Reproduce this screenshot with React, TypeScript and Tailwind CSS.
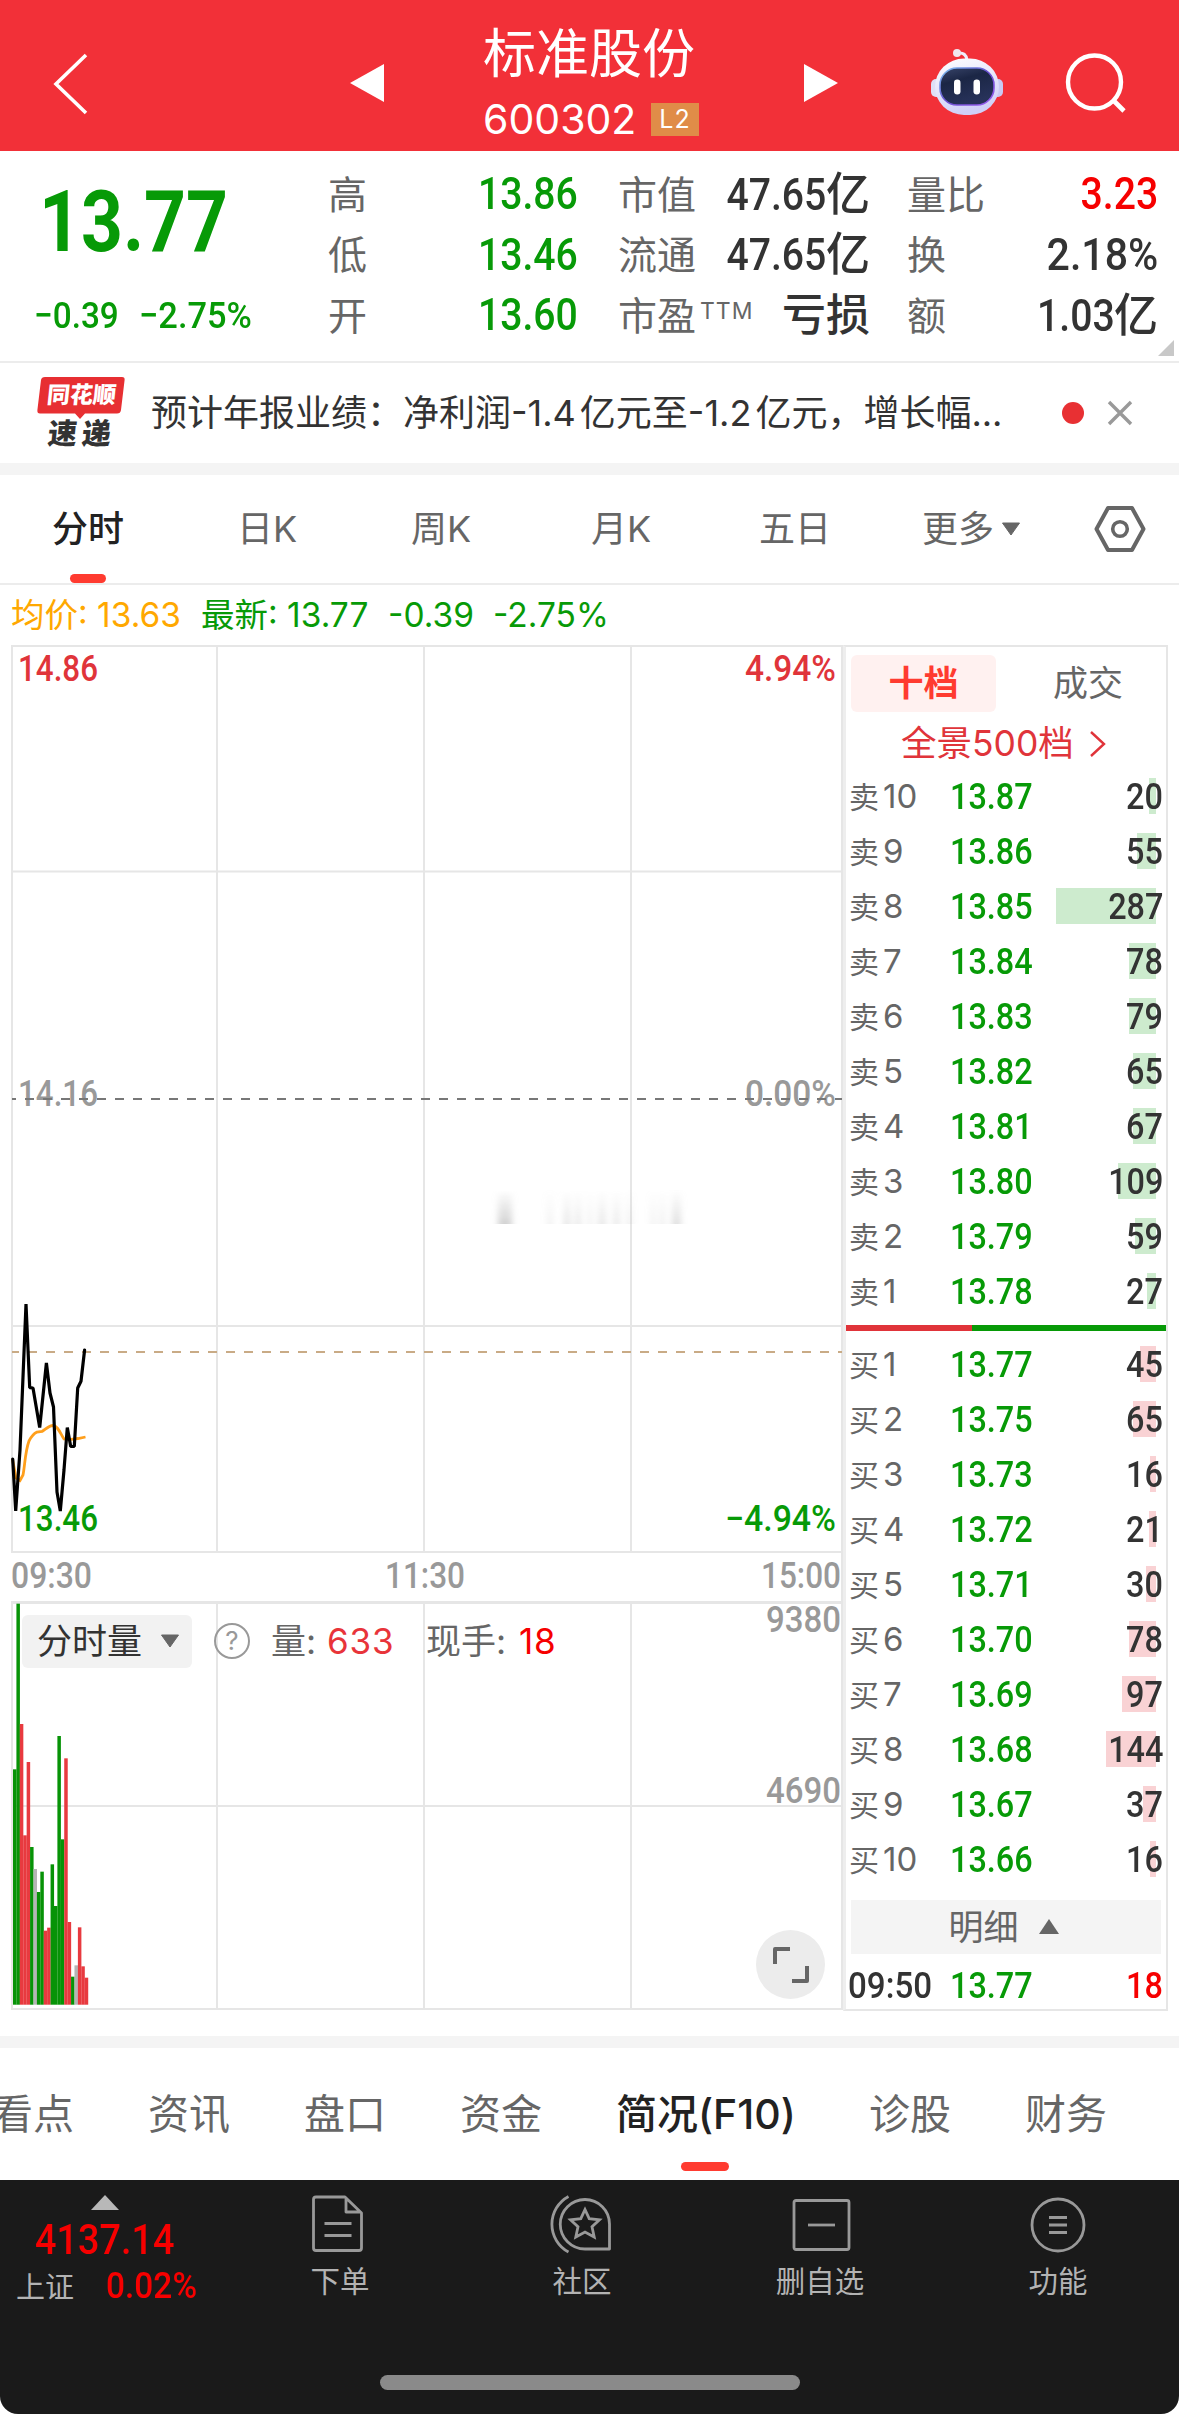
import React from 'react';

type Row = { label: string; no: string; price: string; vol: number };

const asks: Row[] = [
  { label: '卖', no: '10', price: '13.87', vol: 20 },
  { label: '卖', no: '9', price: '13.86', vol: 55 },
  { label: '卖', no: '8', price: '13.85', vol: 287 },
  { label: '卖', no: '7', price: '13.84', vol: 78 },
  { label: '卖', no: '6', price: '13.83', vol: 79 },
  { label: '卖', no: '5', price: '13.82', vol: 65 },
  { label: '卖', no: '4', price: '13.81', vol: 67 },
  { label: '卖', no: '3', price: '13.80', vol: 109 },
  { label: '卖', no: '2', price: '13.79', vol: 59 },
  { label: '卖', no: '1', price: '13.78', vol: 27 },
];

const bids: Row[] = [
  { label: '买', no: '1', price: '13.77', vol: 45 },
  { label: '买', no: '2', price: '13.75', vol: 65 },
  { label: '买', no: '3', price: '13.73', vol: 16 },
  { label: '买', no: '4', price: '13.72', vol: 21 },
  { label: '买', no: '5', price: '13.71', vol: 30 },
  { label: '买', no: '6', price: '13.70', vol: 78 },
  { label: '买', no: '7', price: '13.69', vol: 97 },
  { label: '买', no: '8', price: '13.68', vol: 144 },
  { label: '买', no: '9', price: '13.67', vol: 37 },
  { label: '买', no: '10', price: '13.66', vol: 16 },
];

const pricePoints =
  '12.7,1459 15.7,1511 20,1450 26,1304 29.7,1387.7 33,1388 39.7,1427.5 46.4,1363 50,1393 53.5,1407 57,1492 60.3,1511 64,1470 67.3,1427.5 70.7,1446.5 74.3,1446.5 77.7,1388 81,1381.3 84.6,1350';

const avgPath =
  'M12.5 1459 L16 1478 L20 1480.5 L23 1475 C25 1465 25 1452 29 1441 C32 1435 35 1433 37 1432 L42 1431.5 C46 1429 49 1425.5 53 1425.5 C58 1426 60 1433 64 1439 L71 1439.3 L78 1438.5 L85.5 1437';

// one bar per minute: g = down, r = up, x = flat
const barTops = [688, 191, 552, 886, 666, 921, 987, 1056, 995, 1172, 1163, 973, 1098, 588, 898, 655, 1146, 1310, 1276, 1162, 1279, 1313];
const barKinds = 'ggrrrgxggrrggggrrgxrrr';
const barFill: Record<string, string> = { g: '#079307', r: '#e83a3f', x: '#b5b5b5' };

const Num: React.FC<{ children: React.ReactNode; className?: string }> = ({ children, className = '' }) => (
  <span className={`inline-block whitespace-nowrap font-[Roboto,'Noto_Sans_CJK_SC',sans-serif] ${className}`}>
    {children}
  </span>
);

const AxisText: React.FC<{ x: number; y: number; w: number; fill: string; end?: boolean; children: string }> = ({
  x,
  y,
  w,
  fill,
  end,
  children,
}) => (
  <text
    x={end ? x - w : x}
    y={y}
    textLength={w}
    lengthAdjust="spacingAndGlyphs"
    fill={fill}
    className="font-[Roboto] text-[36px] font-medium"
  >
    {children}
  </text>
);

const Header: React.FC = () => (
  <header className="flex h-[151px] items-start bg-[#f23038] text-white">
    <svg className="mt-[50px] ml-[50px] h-[68px] w-[40px]" viewBox="0 0 40 68" fill="none">
      <path d="M36 5 L6 34 L36 63" stroke="#fff" strokeWidth="3.6" />
    </svg>
    <svg className="mt-[62px] ml-[260px] h-[42px] w-[35px]" viewBox="0 0 35 42">
      <path d="M34 2 L0 21 L34 40Z" fill="#fff" />
    </svg>
    <div className="ml-[98px] w-[220px]">
      <div className="mt-[24px] text-[53px] leading-[60px] whitespace-nowrap">标准股份</div>
      <div className="mt-[13px] flex h-[44px] items-center">
        <span className="text-[41px] leading-[44px]">600302</span>
        <span className="mr-[4px] ml-auto flex h-[33px] w-[48px] items-center justify-center bg-[#e08c48] text-[25px] leading-none tracking-[1px]">
          L2
        </span>
      </div>
    </div>
    <svg className="mt-[62px] ml-[100px] h-[42px] w-[35px]" viewBox="0 0 35 42">
      <path d="M1 2 L35 21 L1 40Z" fill="#fff" />
    </svg>
    <svg className="mt-[48px] ml-[92px] h-[70px] w-[74px]" viewBox="929 48 74 70">
      <defs>
        <linearGradient id="shell" x1="0" y1="0" x2="0.3" y2="1">
          <stop offset="0" stopColor="#ffffff" />
          <stop offset="0.6" stopColor="#e3e3fa" />
          <stop offset="1" stopColor="#cfd0f8" />
        </linearGradient>
        <linearGradient id="face" x1="0" y1="0" x2="0.4" y2="1">
          <stop offset="0" stopColor="#39456a" />
          <stop offset="0.4" stopColor="#1b2645" />
          <stop offset="1" stopColor="#27325a" />
        </linearGradient>
        <linearGradient id="rim" x1="0" y1="0" x2="1" y2="1">
          <stop offset="0" stopColor="#7cc4f0" />
          <stop offset="0.5" stopColor="#6a4fd0" />
          <stop offset="1" stopColor="#9a5cf0" />
        </linearGradient>
      </defs>
      <path d="M957 53 q8 -1 9 7" fill="none" stroke="#efeefb" strokeWidth="3" />
      <circle cx="956" cy="53" r="4" fill="#f0e6ee" />
      <rect x="930" y="79" width="12" height="18" rx="5" fill="#dfe0f6" />
      <rect x="990" y="79" width="12" height="18" rx="5" fill="#c9caf3" />
      <rect x="934" y="58.500" width="64" height="56.500" rx="29" fill="url(#shell)" />
      <rect x="939" y="68" width="54" height="37" rx="17" fill="url(#face)" stroke="url(#rim)" strokeWidth="1.6" />
      <rect x="953" y="79.500" width="6.500" height="15" rx="3.200" fill="#fff" />
      <rect x="972.500" y="79.500" width="6.500" height="15" rx="3.200" fill="#fff" />
    </svg>
    <svg className="mt-[50px] ml-[60px] h-[66px] w-[66px]" viewBox="1063 50 66 66" fill="none" stroke="#fff">
      <circle cx="1093.500" cy="82" r="26.500" strokeWidth="4.400" />
      <path d="M1112 100 L1123 111" strokeWidth="4.600" />
    </svg>
  </header>
);

const Stat: React.FC<{ label: React.ReactNode; children: React.ReactNode }> = ({ label, children }) => (
  <div className="flex h-[60.500px] items-center justify-between">
    <span className="flex text-[39px] leading-none whitespace-nowrap text-[#666]">{label}</span>
    {children}
  </div>
);

const valueCls = 'origin-right scale-x-[0.87] text-[45px] leading-[46px] font-medium';
const Yi = () => <span className="inline-block origin-right scale-x-[1.1] pl-[4px] text-[46px] leading-[46px] font-medium">亿</span>;

const Quote: React.FC = () => (
  <section className="relative flex h-[212px] border-b-2 border-[#ececec] pt-[13px]">
    <div className="w-[328px] text-[#079a07]">
      <Num className="mt-[8px] ml-[39px] origin-left scale-x-[0.86] text-[85px] leading-[100px] font-bold">13.77</Num>
      <div className="mt-[20px] flex text-[37px] leading-[48px] font-medium">
        <Num className="ml-[34px] w-[105px] origin-left scale-x-[0.9]">−0.39</Num>
        <Num className="origin-left scale-x-[0.93]">−2.75%</Num>
      </div>
    </div>
    <div className="w-[250px]">
      <Stat label="高"><Num className={`${valueCls} text-[#079a07]`}>13.86</Num></Stat>
      <Stat label="低"><Num className={`${valueCls} text-[#079a07]`}>13.46</Num></Stat>
      <Stat label="开"><Num className={`${valueCls} text-[#079a07]`}>13.60</Num></Stat>
    </div>
    <div className="ml-[40px] w-[252px] text-[#333]">
      <Stat label="市值"><Num className={valueCls}>47.65<Yi /></Num></Stat>
      <Stat label="流通"><Num className={valueCls}>47.65<Yi /></Num></Stat>
      <Stat label={<>市盈<span className="ml-[4px] text-[23px] leading-[30px] tracking-[1px]">TTM</span></>}>
        <span className="text-[44px] leading-none font-medium">亏损</span>
      </Stat>
    </div>
    <div className="ml-[37px] w-[251px] text-[#333]">
      <Stat label="量比"><Num className={`${valueCls} text-[#f60000]`}>3.23</Num></Stat>
      <Stat label="换"><span className="flex origin-right scale-x-[1.05]"><Num className={valueCls}>2.18%</Num></span></Stat>
      <Stat label="额"><Num className={valueCls}>1.03<Yi /></Num></Stat>
    </div>
    <svg className="absolute right-[5px] bottom-[5px] h-[16px] w-[16px]" viewBox="0 0 16 16">
      <path d="M16 0 V16 H0Z" fill="#c8c8c8" />
    </svg>
  </section>
);

const NewsBar: React.FC = () => (
  <section className="flex h-[100px] items-center">
    <div className="relative ml-[36px] h-[74px] w-[90px] shrink-0">
      <svg className="absolute inset-0 h-[74px] w-[90px]" viewBox="36 375 90 74">
        <path d="M45 376 H122 Q125 376 124.600 379 L121 409 Q120.500 412.500 117 412.500 H85 L80 418 L75 412.500 H40 Q37 412.500 37.400 409 L41 379 Q41.500 376 45 376Z" fill="#e72f32" />
      </svg>
      <span className="absolute top-[7px] left-[11px] -skew-x-6 text-[23px] leading-[24px] font-black whitespace-nowrap text-white">同花顺</span>
      <span className="absolute top-[43px] left-[12px] -skew-x-6 text-[29px] leading-[30px] font-black tracking-[5px] whitespace-nowrap text-[#333]">速递</span>
    </div>
    <span className="ml-[25px] w-[880px] shrink-0 text-[36px] leading-[48px] whitespace-nowrap text-[#333]">
      预计年报业绩：净利润-1.4<span className="ml-[4px]">亿元至-1.2</span><span className="ml-[4px]">亿元，增长幅...</span>
    </span>
    <span className="ml-[31px] h-[22px] w-[22px] rounded-full bg-[#e83033]" />
    <svg className="ml-[23px] h-[26px] w-[26px]" viewBox="0 0 26 26" stroke="#999" strokeWidth="3.400">
      <path d="M2 2 L24 24 M24 2 L2 24" />
    </svg>
  </section>
);

const PeriodTabs: React.FC = () => (
  <nav className="flex h-[110px] items-center border-b-2 border-[#ececec] text-[36px] leading-none whitespace-nowrap text-[#666]">
    <div className="relative ml-[52px] flex h-full w-[185px] items-center font-medium text-[#222]">
      分时
      <span className="absolute bottom-0 left-[18px] h-[9px] w-[36px] rounded-full bg-[#ff3b30]" />
    </div>
    <span className="w-[174px]">日K</span>
    <span className="w-[180px]">周K</span>
    <span className="w-[168px]">月K</span>
    <span className="w-[163px]">五日</span>
    <span>更多</span>
    <svg className="ml-[7px] h-[14px] w-[20px]" viewBox="0 0 20 14">
      <path d="M1.500 1 H18.500 L10 13Z" fill="#666" stroke="#666" strokeLinejoin="round" />
    </svg>
    <svg className="ml-[73px] h-[50px] w-[54px]" viewBox="1093 504 54 50" fill="none" stroke="#666">
      <path d="M1107 508 H1131 L1142.500 529 L1131 550 H1107 L1095.500 529Z" strokeWidth="4" strokeLinejoin="round" />
      <circle cx="1119" cy="529" r="7.300" strokeWidth="3.600" />
    </svg>
  </nav>
);

const PriceChart: React.FC = () => (
  <svg className="block h-[957px] w-[832px] overflow-visible" viewBox="11 645 832 957">
    <defs>
      <linearGradient id="smudge" x1="0" y1="0" x2="0" y2="1">
        <stop offset="0" stopColor="#bbb" stopOpacity="0" />
        <stop offset="1" stopColor="#bbb" stopOpacity="0.65" />
      </linearGradient>
      <filter id="soft" x="-10%" width="120%" y="0" height="1">
        <feGaussianBlur stdDeviation="3 0" />
      </filter>
    </defs>
    <g stroke="#e6e6e6" strokeWidth="2">
      <path d="M11 646 H843 M12 645 V1552 M842 645 V1602 M11 1552 H842" fill="none" />
      <path d="M217 645 V1552 M424 645 V1552 M631 645 V1552 M11 871.500 H842 M11 1326 H842" fill="none" />
    </g>
    <g filter="url(#soft)" fill="url(#smudge)">
      <rect x="498" y="1190" width="14" height="34" />
      <rect x="547" y="1190" width="6" height="34" opacity="0.3" />
      <rect x="564" y="1190" width="6" height="34" opacity="0.6" />
      <rect x="575" y="1190" width="6" height="34" opacity="0.5" />
      <rect x="588" y="1190" width="4" height="34" opacity="0.4" />
      <rect x="598" y="1190" width="8" height="34" opacity="0.5" />
      <rect x="613" y="1190" width="7" height="34" opacity="0.45" />
      <rect x="627" y="1190" width="5" height="34" opacity="0.4" />
      <rect x="651" y="1190" width="4" height="34" opacity="0.4" />
      <rect x="660" y="1190" width="5" height="34" opacity="0.4" />
      <rect x="672" y="1190" width="9" height="34" opacity="0.7" />
    </g>
    <AxisText x={18} y={681} w={80} fill="#e0343a">14.86</AxisText>
    <AxisText x={836} y={681} w={91} fill="#e0343a" end>4.94%</AxisText>
    <AxisText x={18} y={1106} w={80} fill="#999">14.16</AxisText>
    <AxisText x={836} y={1106} w={91} fill="#999" end>0.00%</AxisText>
    <path d="M12 1099 H842" stroke="#777" strokeWidth="2" strokeDasharray="9 9" strokeDashoffset="5" />
    <path d="M12 1352 H842" stroke="#c9ab86" strokeWidth="2" strokeDasharray="9 9" strokeDashoffset="2" />
    <path d={avgPath} fill="none" stroke="#ff9f1c" strokeWidth="2.800" />
    <polyline points={pricePoints} fill="none" stroke="#000" strokeWidth="3.200" strokeLinejoin="bevel" strokeLinecap="round" />
    <AxisText x={18} y={1531} w={80} fill="#079a07">13.46</AxisText>
    <AxisText x={836} y={1531} w={111} fill="#079a07" end>−4.94%</AxisText>
    <AxisText x={11} y={1588} w={81} fill="#999">09:30</AxisText>
    <AxisText x={385} y={1588} w={80} fill="#999">11:30</AxisText>
    <AxisText x={841} y={1588} w={80} fill="#999" end>15:00</AxisText>
  </svg>
);

const VolumeChart: React.FC = () => (
  <div className="relative h-[409px] w-[832px]">
    <svg className="block h-[409px] w-[832px] overflow-visible" viewBox="11 1602 832 409">
      <g stroke="#e6e6e6" strokeWidth="2" fill="none">
        <path d="M11 1602.500 H842" strokeWidth="3" />
        <path d="M12 1602 V2010 M842 1602 V2010 M217 1602 V2010 M424 1602 V2010 M631 1602 V2010 M11 1806 H842 M11 2009 H843" />
      </g>
      {barTops.map((top, i) => {
        const y = 1540 + top / 3;
        return (
          <rect key={i} x={13 + i * 3.415} y={y} width={3.5} height={2004.7 - y} fill={barFill[barKinds[i]]} />
        );
      })}
      <AxisText x={841} y={1632} w={75} fill="#999" end>9380</AxisText>
      <AxisText x={841} y={1803} w={75} fill="#999" end>4690</AxisText>
    </svg>
    <div className="absolute top-[12px] left-[11px] flex h-[54px] items-center text-[35px] leading-none whitespace-nowrap text-[#666]">
      <div className="flex h-[53px] w-[170px] items-center rounded-[6px] bg-[#f2f2f2] pl-[15px] text-[#333]">
        分时量
        <svg className="ml-[18px] h-[14px] w-[20px]" viewBox="0 0 20 14">
          <path d="M1.500 1 H18.500 L10 13Z" fill="#666" stroke="#666" strokeLinejoin="round" />
        </svg>
      </div>
      <span className="ml-[22px] flex h-[36px] w-[36px] items-center justify-center rounded-full border-[2.500px] border-[#999] text-[26px] leading-none text-[#999]">
        ?
      </span>
      <span className="ml-[21px] w-[56px]">量:</span>
      <span className="w-[99px] tracking-[0.8px] text-[#e8343a]">633</span>
      <span className="w-[93px]">现手:</span>
      <span className="tracking-[0.8px] text-[#f60000]">18</span>
    </div>
    <div className="absolute top-[328px] left-[745px] flex h-[69px] w-[69px] items-center justify-center rounded-full bg-[#ececec]">
      <svg className="h-[38px] w-[38px]" viewBox="0 0 38 38" fill="none" stroke="#666" strokeWidth="4">
        <path d="M3 18 V3 H18 M20 35 H35 V20" strokeLinejoin="round" />
      </svg>
    </div>
  </div>
);

const BookRow: React.FC<{ row: Row; sell?: boolean }> = ({ row, sell }) => (
  <div className="relative flex h-[55px] items-center leading-none">
    <span
      className={`absolute top-[9px] right-[10px] h-[36px] ${sell ? 'bg-[#cdebce]' : 'bg-[#f9d2d4]'}`}
      style={{ width: row.vol * 0.348 }}
    />
    <span className="ml-[3px] w-[34px] text-[30px] text-[#666]">{row.label}</span>
    <span className="w-[67px] text-[33px] text-[#666]">{row.no}</span>
    <Num className="origin-left scale-x-[0.9] text-[36px] font-medium text-[#079a07]">{row.price}</Num>
    <Num className="relative mr-[3px] ml-auto origin-right scale-x-[0.9] text-[36px] font-medium text-[#333]">{row.vol}</Num>
  </div>
);

const OrderBook: React.FC = () => (
  <div className="h-[1366px] w-[325px] border-2 border-[#e6e6e6] border-l-[3px] border-l-[#eee]">
    <div className="mt-[8px] flex h-[57px] leading-none">
      <span className="ml-[5px] flex w-[145px] items-center justify-center rounded-[6px] bg-[#fff1f0] text-[35px] font-bold text-[#ff3b30]">
        十档
      </span>
      <span className="flex w-[167px] items-center pl-[57px] text-[35px] text-[#666]">成交</span>
    </div>
    <div className="flex h-[57px] items-center pt-[6px] pl-[55px] text-[35.500px] leading-none whitespace-nowrap text-[#e0343a]">
      全景500档
      <svg className="ml-[15px] h-[28px] w-[18px]" viewBox="0 0 18 28" fill="none" stroke="#e0343a" strokeWidth="2.400">
        <path d="M2 2 L15 14 L2 26" />
      </svg>
    </div>
    {asks.map((row) => (
      <BookRow key={row.no} row={row} sell />
    ))}
    <div className="mt-[6px] mb-[6px] flex h-[6px]">
      <span className="w-[126px] bg-[#e0343a]" />
      <span className="flex-1 bg-[#079a07]" />
    </div>
    {bids.map((row) => (
      <BookRow key={row.no} row={row} />
    ))}
    <div className="mt-[13px] mr-[5px] ml-[5px] flex h-[54px] items-center justify-center bg-[#f4f4f4] pr-[5px] text-[35px] leading-none text-[#666]">
      明细
      <svg className="ml-[20px] h-[16px] w-[20px]" viewBox="0 0 20 16">
        <path d="M0 15 L10 0 L20 15Z" fill="#666" />
      </svg>
    </div>
    <div className="flex h-[64px] items-center leading-none">
      <Num className="ml-[2px] w-[102px] origin-left scale-x-[0.92] text-[36px] font-medium text-[#333]">09:50</Num>
      <Num className="origin-left scale-x-[0.9] text-[36px] font-medium text-[#079a07]">13.77</Num>
      <Num className="mr-[3px] ml-auto origin-right scale-x-[0.9] text-[36px] font-medium text-[#f60000]">18</Num>
    </div>
  </div>
);

const SectionTabs: React.FC = () => (
  <nav className="flex h-[132px] items-center gap-[74px] overflow-hidden pt-[1px] text-[41px] leading-none whitespace-nowrap text-[#666]">
    <span className="ml-[-8px]">看点</span>
    <span>资讯</span>
    <span>盘口</span>
    <span>资金</span>
    <div className="relative flex h-full w-[179px] items-center font-medium text-[#222]">
      简况(F10)
      <span className="absolute bottom-[9px] left-[65px] h-[9px] w-[48px] rounded-full bg-[#ff3b30]" />
    </div>
    <span>诊股</span>
    <span>财务</span>
  </nav>
);

const ToolItem: React.FC<{ label: string; className: string; children: React.ReactNode }> = ({ label, className, children }) => (
  <div className={`flex w-[100px] flex-col items-center ${className}`}>
    <svg className="mt-[14px] h-[62px] w-[64px]" viewBox="0 0 64 62" fill="none" stroke="#999" strokeWidth="2.800">
      {children}
    </svg>
    <span className="mt-[8px] text-[29.500px] leading-[34px] whitespace-nowrap text-[#b3b3b3]">{label}</span>
  </div>
);

const BottomBar: React.FC = () => (
  <footer className="relative flex h-[234px] rounded-b-[18px] bg-[#1a1a1a]">
    <div className="w-[212px]">
      <svg className="mt-[15px] ml-[91px] block h-[15px] w-[28px]" viewBox="0 0 28 15">
        <path d="M0 15 L14 0 L28 15Z" fill="#b8b8b8" />
      </svg>
      <div className="mt-[9px] h-[42px] pl-[35px]">
        <Num className="origin-left scale-x-[0.9] text-[42px] leading-[42px] font-medium text-[#f60000]">4137.14</Num>
      </div>
      <div className="mt-[5px] flex h-[40px] items-center">
        <span className="ml-[16px] w-[90px] pt-[2px] text-[29px] leading-none text-[#b3b3b3]">上证</span>
        <Num className="origin-left scale-x-[0.93] text-[36px] leading-none font-medium text-[#f60000]">0.02%</Num>
      </div>
    </div>
    <ToolItem label="下单" className="ml-[78px]">
      <path d="M33 3 H8 Q5.500 3 5.500 5.500 V54 Q5.500 56.500 8 56.500 H51 Q53.500 56.500 53.500 54 V19 L37 3Z M38 4 V18 H53" strokeLinejoin="round" />
      <path d="M16.500 29.500 H43.500 M16.500 41.500 H43.500" />
    </ToolItem>
    <ToolItem label="社区" className="ml-[142px]">
      <path d="M35 5.500 A24.500 24.500 0 0 0 35 55 H59.500 V30 A24.500 24.500 0 0 0 35 5.500Z" strokeLinejoin="round" />
      <path d="M18.500 2.500 A31.500 31.500 0 0 0 18.500 58" />
      <path d="M35 15.500 L39.200 24.700 L49.500 25.800 L42 32.800 L44.200 43 L35 38 L25.800 43 L28 32.800 L20.500 25.800 L30.800 24.700Z" />
    </ToolItem>
    <ToolItem label="删自选" className="ml-[138px]">
      <rect x="6" y="6.500" width="55" height="49" rx="2" />
      <path d="M20 31 H47" />
    </ToolItem>
    <ToolItem label="功能" className="ml-[138px]">
      <circle cx="32" cy="31" r="26" />
      <path d="M23 23.500 H41 M23 31 H41 M23 38.500 H41" />
    </ToolItem>
    <span className="absolute bottom-[24px] left-[380px] h-[15px] w-[420px] rounded-full bg-[#8a8a8a]" />
  </footer>
);

const App: React.FC = () => {
  return (
    <div className="h-[2414px] w-[1179px] overflow-hidden bg-white font-[Inter,'Noto_Sans_CJK_SC',sans-serif]">
      <Header />
      <Quote />
      <NewsBar />
      <div className="h-[12px] bg-[#f4f4f4]" />
      <PeriodTabs />
      <div className="flex h-[60px] items-center pt-[1px] pl-[11px] text-[33.500px] leading-none whitespace-nowrap text-[#079a07]">
        <span className="w-[190px] text-[#ffa800]">均价: 13.63</span>
        <span className="w-[187px]">最新: 13.77</span>
        <span className="w-[105px]">-0.39</span>
        <span>-2.75%</span>
      </div>
      <div className="flex h-[1366px] pl-[11px]">
        <div className="w-[832px]">
          <PriceChart />
          <VolumeChart />
        </div>
        <OrderBook />
      </div>
      <div className="mt-[25px] h-[12px] bg-[#f4f4f4]" />
      <SectionTabs />
      <BottomBar />
    </div>
  );
};

export default App;
